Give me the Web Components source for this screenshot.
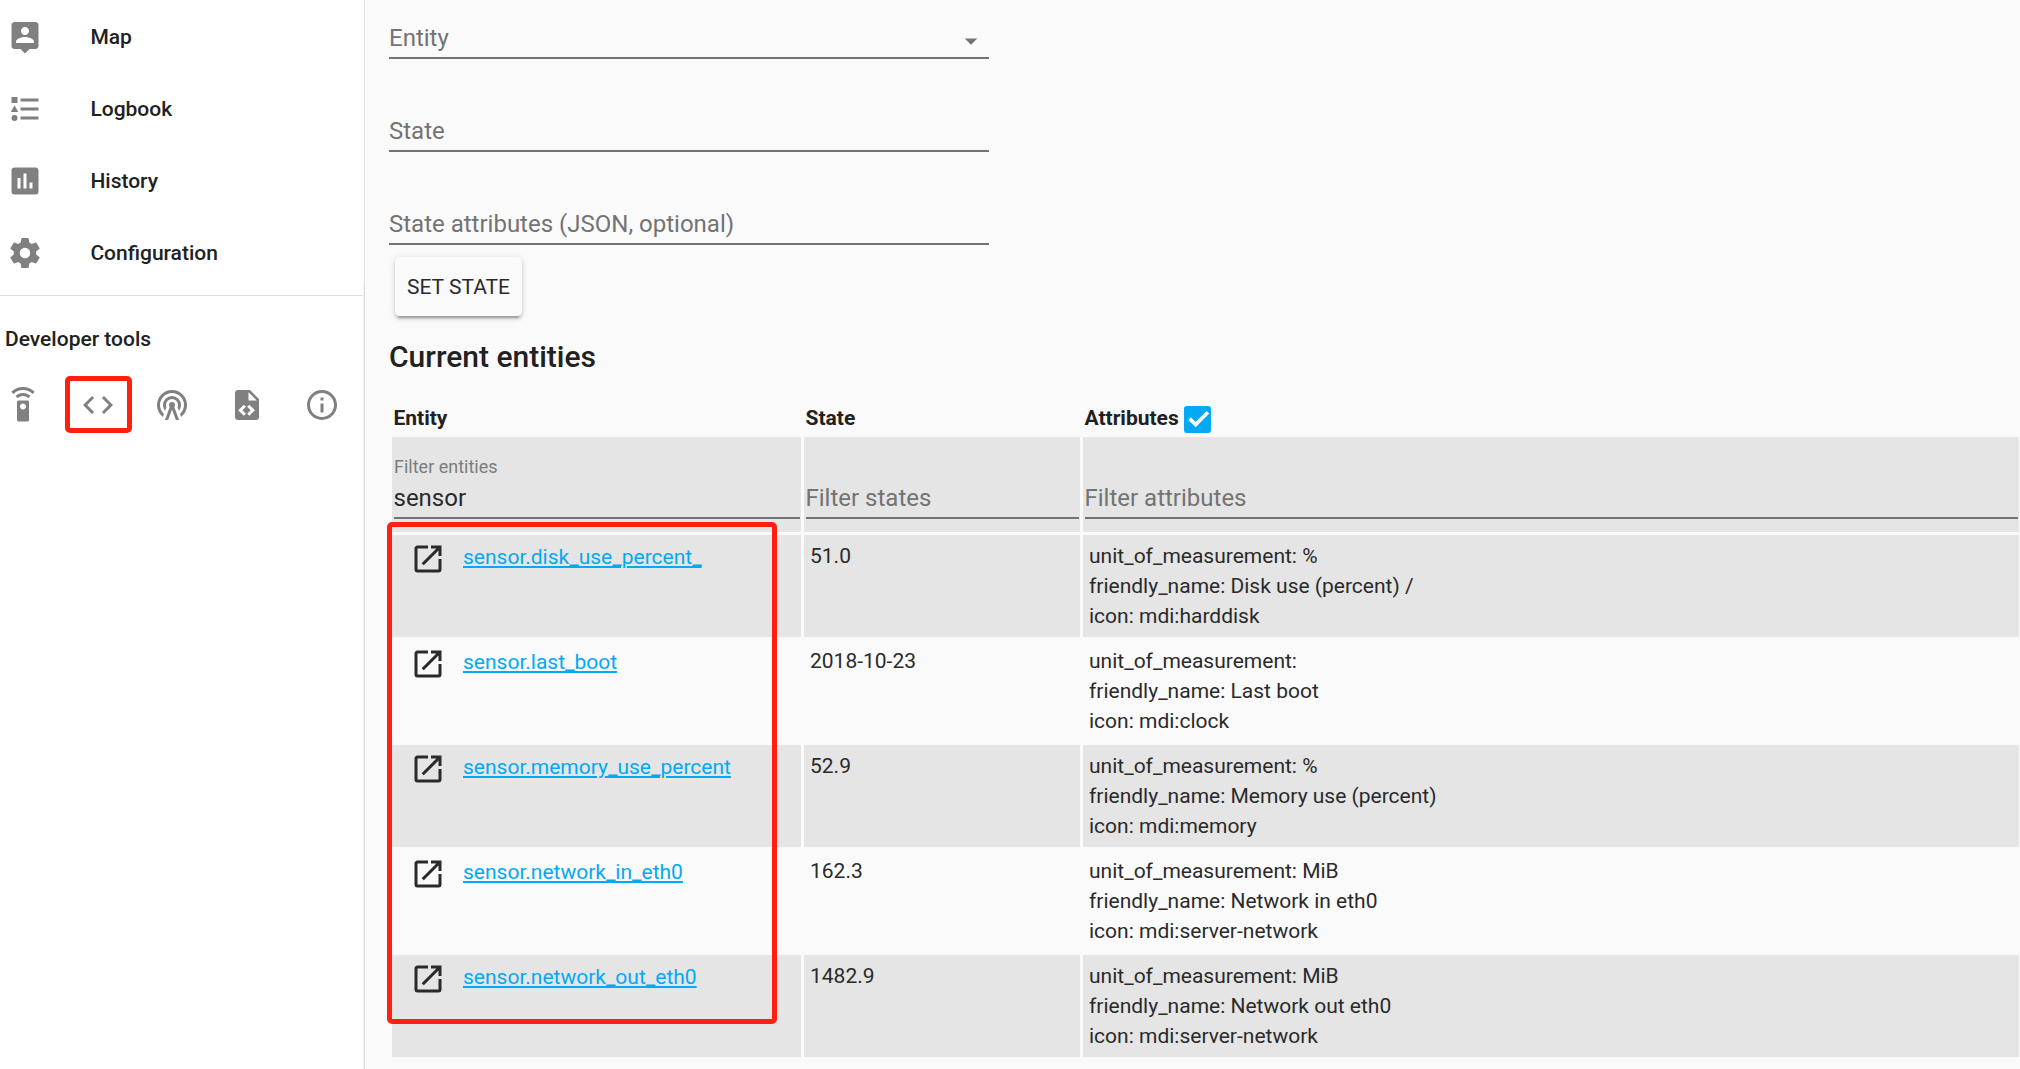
<!DOCTYPE html>
<html lang="en">
<head>
<meta charset="utf-8">
<title>Developer tools</title>
<style>
  html, body { margin: 0; height: 100%; overflow: hidden; }
  body {
    font: 400 21px/30px Roboto, "Noto Sans", sans-serif;
    color: #2a2a2a;
    background: #fafafa;
    --strong: #212121;
    --accent: #03a9f4;
    --secondary: #737373;
    --icon: #808080;
    --stripe: #e5e5e5;
    --mark: #ff2010;
  }
</style>
</head>
<body>
<dev-app></dev-app>
<script>
const ICONS = {
  map: "M19 2H5c-1.11 0-2 .9-2 2v14c0 1.1.89 2 2 2h4l3 3 3-3h4c1.1 0 2-.9 2-2V4c0-1.1-.9-2-2-2zm-7 3.3c1.49 0 2.7 1.21 2.7 2.7 0 1.49-1.21 2.7-2.7 2.7-1.49 0-2.7-1.21-2.7-2.7 0-1.49 1.21-2.7 2.7-2.7zM18 16H6v-.9c0-2 4-3.1 6-3.1s6 1.1 6 3.1v.9z",
  list: "M5,9.5L7.5,14H2.5L5,9.5M3,4H7V8H3V4M5,20A2,2 0 0,0 7,18A2,2 0 0,0 5,16A2,2 0 0,0 3,18A2,2 0 0,0 5,20M9,5V7H21V5H9M9,19H21V17H9V19M9,13H21V11H9V13Z",
  poll: "M17,17H15V13H17M13,17H11V7H13M9,17H7V10H9M19,3H5C3.89,3 3,3.89 3,5V19A2,2 0 0,0 5,21H19A2,2 0 0,0 21,19V5C21,3.89 20.1,3 19,3Z",
  settings: "M12,15.5A3.5,3.5 0 0,1 8.5,12A3.5,3.5 0 0,1 12,8.5A3.5,3.5 0 0,1 15.5,12A3.5,3.5 0 0,1 12,15.5M19.43,12.97C19.47,12.65 19.5,12.33 19.5,12C19.5,11.67 19.47,11.34 19.43,11L21.54,9.37C21.73,9.22 21.78,8.95 21.66,8.73L19.66,5.27C19.54,5.05 19.27,4.96 19.05,5.05L16.56,6.05C16.04,5.66 15.5,5.32 14.87,5.07L14.5,2.42C14.46,2.18 14.25,2 14,2H10C9.75,2 9.54,2.18 9.5,2.42L9.13,5.07C8.5,5.32 7.96,5.66 7.44,6.05L4.95,5.05C4.73,4.96 4.46,5.05 4.34,5.27L2.34,8.73C2.21,8.95 2.27,9.22 2.46,9.37L4.57,11C4.53,11.34 4.5,11.67 4.5,12C4.5,12.33 4.53,12.65 4.57,12.97L2.46,14.63C2.27,14.78 2.21,15.05 2.34,15.27L4.34,18.73C4.46,18.95 4.73,19.03 4.95,18.95L7.44,17.94C7.96,18.34 8.5,18.68 9.13,18.93L9.5,21.58C9.54,21.82 9.75,22 10,22H14C14.25,22 14.46,21.82 14.5,21.58L14.87,18.93C15.5,18.67 16.04,18.34 16.56,17.94L19.05,18.95C19.27,19.03 19.54,18.95 19.66,18.73L21.66,15.27C21.78,15.05 21.73,14.78 21.54,14.63L19.43,12.97Z",
  remote: "M15 9H9c-.55 0-1 .45-1 1v12c0 .55.45 1 1 1h6c.55 0 1-.45 1-1V10c0-.55-.45-1-1-1zm-3 6c-1.1 0-2-.9-2-2s.9-2 2-2 2 .9 2 2-.9 2-2 2zM7.05 6.05l1.41 1.41C9.37 6.56 10.62 6 12 6s2.63.56 3.54 1.46l1.41-1.41C15.68 4.78 13.93 4 12 4s-3.68.78-4.95 2.05zM12 0C8.96 0 6.21 1.23 4.22 3.22l1.41 1.41C7.26 3.01 9.51 2 12 2s4.74 1.01 6.36 2.64l1.41-1.41C17.79 1.23 15.04 0 12 0z",
  code: "M14.6,16.6L19.2,12L14.6,7.4L16,6L22,12L16,18L14.6,16.6M9.4,16.6L4.8,12L9.4,7.4L8,6L2,12L8,18L9.4,16.6Z",
  tower: "M12,10A2,2 0 0,1 14,12C14,12.5 13.82,12.94 13.53,13.29L16.7,22H14.57L12,14.93L9.43,22H7.3L10.47,13.29C10.18,12.94 10,12.5 10,12A2,2 0 0,1 12,10M12,8A4,4 0 0,0 8,12C8,12.5 8.1,13 8.28,13.46L7.4,15.86C6.53,14.81 6,13.47 6,12A6,6 0 0,1 12,6A6,6 0 0,1 18,12C18,13.47 17.47,14.81 16.6,15.86L15.72,13.46C15.9,13 16,12.5 16,12A4,4 0 0,0 12,8M12,4A8,8 0 0,0 4,12C4,14.36 5,16.5 6.64,17.94L5.92,19.94C3.54,18.11 2,15.23 2,12A10,10 0 0,1 12,2A10,10 0 0,1 22,12C22,15.23 20.46,18.11 18.08,19.94L17.36,17.94C19,16.5 20,14.36 20,12A8,8 0 0,0 12,4Z",
  file: "M13,9H18.5L13,3.5V9M6,2H14L20,8V20A2,2 0 0,1 18,22H6C4.89,22 4,21.1 4,20V4C4,2.89 4.89,2 6,2M6.12,15.5L9.86,19.24L11.28,17.83L8.95,15.5L11.28,13.17L9.86,11.76L6.12,15.5M17.28,15.5L13.54,11.76L12.12,13.17L14.45,15.5L12.12,17.83L13.54,19.24L17.28,15.5Z",
  info: "M11,9H13V7H11M12,20C7.59,20 4,16.41 4,12C4,7.59 7.59,4 12,4C16.41,4 20,7.59 20,12C20,16.41 16.41,20 12,20M12,2A10,10 0 0,0 2,12A10,10 0 0,0 12,22A10,10 0 0,0 22,12A10,10 0 0,0 12,2M11,17H13V11H11V17Z",
  open: "M14,3V5H17.59L7.76,14.83L9.17,16.24L19,6.41V10H21V3M19,19H5V5H12V3H5C3.89,3 3,3.9 3,5V19A2,2 0 0,0 5,21H19A2,2 0 0,0 21,19V12H19V19Z",
  drop: "M7,10L12,15L17,10H7Z"
};

function define(name, render) {
  customElements.define(name, class extends HTMLElement {
    constructor() { super(); this.attachShadow({ mode: "open" }); }
    connectedCallback() { this.shadowRoot.innerHTML = render(this); }
  });
}

define("app-icon", el => `
  <style>
    :host { display: block; flex: none; width: 36px; height: 36px; }
    svg { display: block; width: 100%; height: 100%; fill: currentColor; }
  </style>
  <svg viewBox="0 0 24 24"><path d="${ICONS[el.getAttribute("name")]}"/></svg>`);

define("nav-item", el => `
  <style>
    :host { display: flex; align-items: center; gap: 47.4px; height: 72px; padding-left: 7px; font-weight: 500; color: var(--strong); }
    app-icon { color: var(--icon); }
  </style>
  <app-icon name="${el.getAttribute("icon")}"></app-icon><span><slot></slot></span>`);

define("dev-tools", () => `
  <style>
    :host { display: block; border-top: 1px solid #e0e0e0; padding: 28px 0 0 5px; }
    .title { font-weight: 500; color: var(--strong); }
    .row { display: flex; justify-content: space-between; width: 335px; margin-top: 33px; color: var(--icon); }
    .marked { position: relative; }
    .marked i { position: absolute; left: -15px; top: -11px; width: 57px; height: 47px; border: 5px solid var(--mark); border-radius: 5px; }
    app-icon[name="tower"] { margin: 0 .5px 0 -.5px; }
  </style>
  <div class="title">Developer tools</div>
  <div class="row">
    <app-icon name="remote"></app-icon>
    <div class="marked"><app-icon name="code"></app-icon><i></i></div>
    <app-icon name="tower"></app-icon>
    <app-icon name="file"></app-icon>
    <app-icon name="info"></app-icon>
  </div>`);

define("side-bar", () => `
  <style>
    :host { display: flex; flex-direction: column; box-sizing: border-box; flex: none; width: 365px; height: 100%; background: #fff; border-right: 1px solid #e0e0e0; }
    nav { height: 282px; padding-top: 1px; }
    .lower { flex: 1; padding-top: 12px; border-right: 1px solid #f0f0f0; }
  </style>
  <nav>
    <nav-item icon="map">Map</nav-item>
    <nav-item icon="list">Logbook</nav-item>
    <nav-item icon="poll">History</nav-item>
    <nav-item icon="settings">Configuration</nav-item>
  </nav>
  <div class="lower"><dev-tools></dev-tools></div>`);

define("text-field", el => {
  const value = el.getAttribute("value"), label = el.getAttribute("label");
  return `
  <style>
    :host { display: flex; flex-direction: column; justify-content: flex-end; box-sizing: border-box; border-bottom: 2px solid var(--secondary); color: var(--secondary); font-size: 24px; line-height: 36px; padding-bottom: 1px; }
    .float { font-size: 18px; line-height: 26px; color: #7c7c7c; }
    .value { color: #2a2a2a; margin-left: -.5px; }
    .line { display: flex; justify-content: space-between; align-items: center; }
    app-icon { width: 30px; height: 30px; margin: 7px 3px 0 0; }
  </style>
  ${value ? `<div class="float">${label}</div><div class="value">${value}</div>`
    : `<div class="line"><span>${label}</span>${el.hasAttribute("menu") ? `<app-icon name="drop"></app-icon>` : ""}</div>`}`;
});

define("raised-button", () => `
  <style>
    :host { display: flex; align-items: center; justify-content: center; width: 127px; height: 59px; border-radius: 4.5px; background: #fafafa;
      box-shadow: 0 3px 3px rgba(0,0,0,.14), 0 1.5px 7.5px rgba(0,0,0,.12), 0 4.5px 1.5px -3px rgba(0,0,0,.2); }
  </style><span><slot></slot></span>`);

define("check-box", () => `
  <style>
    :host { display: block; width: 27px; height: 27px; border-radius: 3px; background: var(--accent); }
    svg { display: block; }
  </style>
  <svg width="27" height="27" viewBox="0 0 27 27"><path d="M5.6 12.6L11.7 18.6L23.9 6.3" fill="none" stroke="#fff" stroke-width="3.6"/></svg>`);

define("entity-row", el => {
  const attrs = el.getAttribute("attributes").split("|");
  return `
  <style>
    :host { display: grid; grid-template-columns: 409px 276px 936px; column-gap: 3px; height: 102px; }
    .cell { padding: 6px; background: var(--row, transparent); box-sizing: border-box; }
    .entity { display: flex; gap: 17px; padding-left: 18px; align-items: flex-start; }
    a { color: var(--accent); text-decoration: underline; text-decoration-thickness: 2px; text-underline-offset: 2px; margin-top: 1px; }
  </style>
  <div class="cell entity"><app-icon name="open"></app-icon><a>${el.getAttribute("entity")}</a></div>
  <div class="cell">${el.getAttribute("state")}</div>
  <div class="cell">${attrs.map(a => `<div>${a}</div>`).join("")}</div>`;
});

define("entity-table", () => `
  <style>
    :host { display: flex; flex-direction: column; gap: 3px; position: relative; width: 1627px; }
    .head, .filters { display: grid; grid-template-columns: 409px 276px 936px; column-gap: 3px; }
    .head { height: 32px; font-weight: 700; color: var(--strong); }
    .head > div { display: flex; gap: 5px; padding: 1px 0 0 1.5px; }
    check-box { margin-top: 3px; }
    .filters > div { display: flex; flex-direction: column; justify-content: flex-end; box-sizing: border-box; height: 95px; padding: 0 1px 13px 2px; background: var(--stripe); }
    .filters > div + div { padding-left: 1.5px; }
    .odd { --row: var(--stripe); }
    .mark { position: absolute; left: -5px; top: 120px; width: 380px; height: 492px; border: 5px solid var(--mark); border-radius: 5px; }
  </style>
  <div class="head"><div>Entity</div><div>State</div><div>Attributes<check-box></check-box></div></div>
  <div class="filters">
    <div><text-field label="Filter entities" value="sensor"></text-field></div>
    <div><text-field label="Filter states"></text-field></div>
    <div><text-field label="Filter attributes"></text-field></div>
  </div>
  <entity-row class="odd" entity="sensor.disk_use_percent_" state="51.0" attributes="unit_of_measurement: %|friendly_name: Disk use (percent) /|icon: mdi:harddisk"></entity-row>
  <entity-row entity="sensor.last_boot" state="2018-10-23" attributes="unit_of_measurement:|friendly_name: Last boot|icon: mdi:clock"></entity-row>
  <entity-row class="odd" entity="sensor.memory_use_percent" state="52.9" attributes="unit_of_measurement: %|friendly_name: Memory use (percent)|icon: mdi:memory"></entity-row>
  <entity-row entity="sensor.network_in_eth0" state="162.3" attributes="unit_of_measurement: MiB|friendly_name: Network in eth0|icon: mdi:server-network"></entity-row>
  <entity-row class="odd" entity="sensor.network_out_eth0" state="1482.9" attributes="unit_of_measurement: MiB|friendly_name: Network out eth0|icon: mdi:server-network"></entity-row>
  <div class="mark"></div>`);

define("state-panel", () => `
  <style>
    :host { display: block; flex: 1; min-width: 0; padding: 0 0 0 24px; }
    .form { display: flex; flex-direction: column; width: 600px; }
    .form text-field { height: 93px; }
    .form text-field:first-child { height: 59px; }
    raised-button { margin: 12px 0 0 6px; }
    h1 { margin: 22px 0 0; font-size: 30px; line-height: 38px; font-weight: 500; color: var(--strong); }
    entity-table { margin: 26px 0 0 3px; }
  </style>
  <div class="form">
    <text-field label="Entity" menu></text-field>
    <text-field label="State"></text-field>
    <text-field label="State attributes (JSON, optional)"></text-field>
  </div>
  <raised-button>SET STATE</raised-button>
  <h1>Current entities</h1>
  <entity-table></entity-table>`);

define("dev-app", () => `
  <style>:host { display: flex; width: 2020px; height: 1069px; overflow: hidden; }</style>
  <side-bar></side-bar>
  <state-panel></state-panel>`);
</script>
</body>
</html>
